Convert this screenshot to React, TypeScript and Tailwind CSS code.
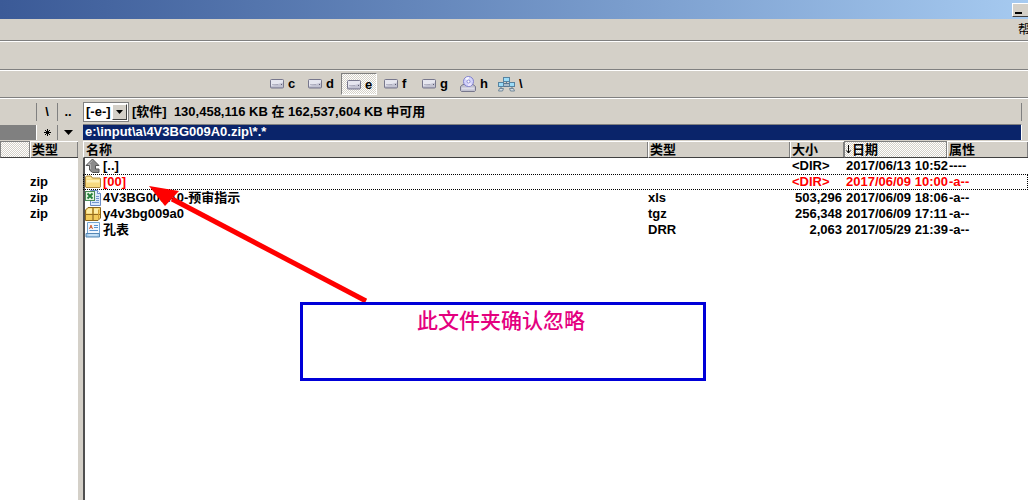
import { useState } from "react";
import type { ReactNode } from "react";

type IconName = "up" | "folder" | "excel" | "archive" | "document";

interface FileEntry {
  icon: IconName;
  name: string;
  type: string;
  size: string;
  date: string;
  attributes: string;
  focused?: boolean;
}

const files: FileEntry[] = [
  { icon: "up", name: "[..]", type: "", size: "<DIR>", date: "2017/06/13 10:52", attributes: "----" },
  { icon: "folder", name: "[00]", type: "", size: "<DIR>", date: "2017/06/09 10:00", attributes: "-a--", focused: true },
  { icon: "excel", name: "4V3BG009A0-预审指示", type: "xls", size: "503,296", date: "2017/06/09 18:06", attributes: "-a--" },
  { icon: "archive", name: "y4v3bg009a0", type: "tgz", size: "256,348", date: "2017/06/09 17:11", attributes: "-a--" },
  { icon: "document", name: "孔表", type: "DRR", size: "2,063", date: "2017/05/29 21:39", attributes: "-a--" },
];

const drives = ["c", "d", "e", "f", "g", "h", "\\"];

const leftTypes = ["", "zip", "zip", "zip"];

const hatch = "bg-[repeating-conic-gradient(#ffffff_0_25%,#d4d0c8_0_50%)] bg-[length:2px_2px]";

function Rule() {
  return (
    <div>
      <div className="h-px bg-[#808080]" />
      <div className="h-px bg-white" />
    </div>
  );
}

function DiskIcon() {
  return (
    <svg width="14" height="10" viewBox="0 0 14 10" aria-hidden="true">
      <rect x="0.5" y="0.5" width="13" height="8.5" rx="1" fill="#c3c3d2" stroke="#77778c" />
      <path d="M1 1h12v2.500L1 7z" fill="#e6e6ef" />
      <path d="M2.500 5.500h6" stroke="#85859a" strokeDasharray="1 1" />
      <path d="M1 8.500h12" stroke="#9494a8" />
      <rect x="11" y="5" width="1" height="1" fill="#5a5a70" />
    </svg>
  );
}

function DiscIcon() {
  return (
    <svg width="16" height="16" viewBox="0 0 16 16" aria-hidden="true">
      <path d="M3 8.500h10l2.500 2v4l-1 1h-13l-1-1v-4z" fill="#c0c0cf" stroke="#77778c" />
      <path d="M1.500 11.500h13v2h-13z" fill="#dedeea" />
      <circle cx="8.500" cy="5.500" r="5" fill="#d3d3fb" stroke="#8080cc" />
      <path d="M8.500 5.500L5 2.500A4.500 4.500 0 0 1 9 1z" fill="#f8f8ff" />
      <path d="M8.500 5.500l3.500 3A4.500 4.500 0 0 1 8 10z" fill="#f0e8ff" />
      <circle cx="8.500" cy="5.500" r="1.500" fill="#fff" stroke="#7777c4" strokeWidth="0.8" />
    </svg>
  );
}

function NetworkIcon() {
  return (
    <svg width="17" height="15" viewBox="0 0 17 15" aria-hidden="true">
      <rect x="5.500" y="0.5" width="6" height="4" fill="#9bdcf8" stroke="#5883a0" />
      <path d="M8.500 5v1M3 10v1M14 10v1" stroke="#5c7890" />
      <rect x="5.500" y="6.500" width="6" height="3" fill="#a9bccb" stroke="#5c7890" />
      <rect x="0.5" y="5.500" width="5" height="4" fill="#9bdcf8" stroke="#5883a0" />
      <rect x="11.500" y="5.500" width="5" height="4" fill="#9bdcf8" stroke="#5883a0" />
      <path d="M1.500 11.500h4l-1 2.500H.5zM11.500 11.500h4l1 2.500h-4z" fill="#d5dee5" stroke="#708798" />
    </svg>
  );
}

function DriveIcon({ drive }: { drive: string }) {
  if (drive === "h") return <DiscIcon />;
  if (drive === "\\") return <NetworkIcon />;
  return <DiskIcon />;
}

function FileIcon({ icon }: { icon: IconName }) {
  if (icon === "up") {
    return (
      <svg width="16" height="16" viewBox="0 0 16 16" aria-hidden="true">
        <path d="M7.500 1L14 7.500h-3.500V11H14v3.500H7.500L4.500 12V7.500H1z" fill="#8b8b8b" stroke="#555" strokeLinejoin="round" />
        <path d="M7.500 2.500L3 6.500h2.500V11" fill="none" stroke="#b5b5b5" />
      </svg>
    );
  }
  if (icon === "folder") {
    return (
      <svg width="16" height="16" viewBox="0 0 16 16" aria-hidden="true">
        <path d="M.5 13V3l1-1h4.500l1.500 2H15l.5 1v8l-.5.5H1z" fill="#f7da80" stroke="#b08c40" />
        <path d="M1.500 6h13v2.500h-13z" fill="#fdf0b4" />
        <path d="M1.500 3h4l1.500 2H1.500z" fill="#fbe79a" />
      </svg>
    );
  }
  if (icon === "excel") {
    return (
      <svg width="16" height="16" viewBox="0 0 16 16" aria-hidden="true">
        <path d="M5.500.5h7l3 3v12h-10z" fill="#dbe8fb" stroke="#6a8bc4" />
        <path d="M12.500.5v3h3" fill="#fff" stroke="#6a8bc4" />
        <path d="M7 12.500h7M11 6.500h3M11 8.500h3M11 10.500h3" stroke="#7397cf" />
        <rect x="0.5" y="1.500" width="9" height="9" fill="#e2f3df" stroke="#4b8c56" />
        <path d="M2.500 3.500l5 5M7.500 3.500l-5 5" stroke="#23803a" strokeWidth="1.800" />
      </svg>
    );
  }
  if (icon === "archive") {
    return (
      <svg width="16" height="16" viewBox="0 0 16 16" aria-hidden="true">
        <path d="M3 1.500h12.500V12L13 14.500H.5V4z" fill="#f1cb5c" stroke="#8a651b" />
        <path d="M1.500 4.500L3.500 2.500h3.500v5H1.500zM9 2.500h5l-1 5H9z" fill="#fdeda6" />
        <path d="M.5 8.500h14.500M8 1.500v13" stroke="#946c1e" strokeWidth="1.200" />
        <path d="M13.500 3.500V13" stroke="#cf9d36" />
      </svg>
    );
  }
  return (
    <svg width="16" height="16" viewBox="0 0 16 16" aria-hidden="true">
      <path d="M2.500.5h12v12h-12z" fill="#f1f7fe" stroke="#76a6d2" />
      <path d="M1 11.500h13.500v3.500H1z" fill="#a5cdec" stroke="#5587b4" />
      <path d="M4.500 7l1.500-4L7.500 7M5 5.500h2" fill="none" stroke="#d4663a" />
      <path d="M9 3.500h4M9 5.500h4M4.500 8.500H13" stroke="#5b94cf" />
      <path d="M3.500 13h9" stroke="#e7f3fd" />
    </svg>
  );
}

function DriveBar({ current, onChange }: { current: string; onChange: (drive: string) => void }) {
  return (
    <nav className="flex h-[26px] items-center gap-0.5 pl-[265px]">
      {drives.map((drive) => (
        <button
          key={drive}
          onClick={() => onChange(drive)}
          className={`flex h-[22px] w-9 items-center gap-1 border pl-1 ${
            drive === current
              ? `${hatch} border-t-[#808080] border-l-[#808080] border-r-white border-b-white pt-0.5 pl-[5px]`
              : "border-transparent"
          }`}
        >
          <DriveIcon drive={drive} />
          <span>{drive}</span>
        </button>
      ))}
    </nav>
  );
}

function HeaderCell({ children, className = "", sorted = false }: { children: ReactNode; className?: string; sorted?: boolean }) {
  return (
    <th
      className={`h-[17px] border-b border-b-[#404040] border-l p-0 text-left ${
        sorted ? `${hatch} border-l-[#808080] border-t border-t-[#808080]` : "border-l-white border-t border-t-white bg-[#d4d0c8]"
      } ${className}`}
    >
      <button className="flex h-[15px] w-full items-center border-r border-[#808080] pl-px leading-[15px]">{children}</button>
    </th>
  );
}

function LeftPanel() {
  return (
    <section className="flex w-[78px] shrink-0 flex-col">
      <div className="flex h-[25px] items-center pl-9">
        <button className="h-[18px] w-[21px] border-l border-[#808080] leading-4">\</button>
        <button className="h-[18px] w-[21px] border-l border-[#808080] leading-4">..</button>
      </div>
      <div className="flex h-[17px] items-center">
        <div className="h-[15px] w-9 bg-[#808080]" />
        <button className="flex h-[15px] w-[21px] items-center justify-center border-l border-white" aria-label="*">
          <svg width="7" height="7" viewBox="0 0 7 7">
            <path d="M3.500 0v7M0 3.500h7M1 1l5 5M6 1L1 6" stroke="#000" />
          </svg>
        </button>
        <button className="flex h-[15px] w-[21px] items-center justify-center border-l border-[#808080]" aria-label="History">
          <svg width="9" height="5" viewBox="0 0 9 5">
            <path d="M0 0h9L4.500 5z" />
          </svg>
        </button>
      </div>
      <table className="w-full table-fixed border-separate border-spacing-0">
        <thead>
          <tr>
            <HeaderCell className="w-[30px]" sorted>
              {""}
            </HeaderCell>
            <HeaderCell>类型</HeaderCell>
          </tr>
        </thead>
        <tbody className="bg-white">
          {leftTypes.map((type, index) => (
            <tr key={index}>
              <td className="h-4 p-0" />
              <td className="h-4 p-0">{type}</td>
            </tr>
          ))}
        </tbody>
      </table>
      <div className="flex-1 bg-white" />
    </section>
  );
}

function FileTable() {
  return (
    <table className="w-full table-fixed border-separate border-spacing-0">
      <thead>
        <tr>
          <HeaderCell>
            <span className="pl-px">名称</span>
          </HeaderCell>
          <HeaderCell className="w-[142px]">类型</HeaderCell>
          <HeaderCell className="w-[54px]">大小</HeaderCell>
          <HeaderCell className="w-[103px]" sorted>
            <svg className="mr-px" width="5" height="9" viewBox="0 0 5 9" aria-hidden="true">
              <path d="M2.500 0v8M.5 5.500l2 2.500 2-2.500" fill="none" stroke="#000" />
            </svg>
            日期
          </HeaderCell>
          <HeaderCell className="w-[81px]">属性</HeaderCell>
        </tr>
      </thead>
      <tbody className="bg-white">
        {files.map((file) => (
          <tr
            key={file.name}
            className={file.focused ? "text-[#ff0000] outline-1 -outline-offset-1 outline-dotted outline-black" : ""}
          >
            <td className="h-4 border-l-2 border-[#505050] p-0">
              <div className="flex h-4 items-center gap-0.5">
                <FileIcon icon={file.icon} />
                <span className="whitespace-nowrap">{file.name}</span>
              </div>
            </td>
            <td className="h-4 p-0">{file.type}</td>
            <td className={`h-4 p-0 ${file.type ? "pr-0.5 text-right" : "pl-0.5"}`}>{file.size}</td>
            <td className="h-4 whitespace-nowrap p-0 pl-0.5">{file.date}</td>
            <td className="h-4 p-0 pl-0.5">{file.attributes}</td>
          </tr>
        ))}
      </tbody>
    </table>
  );
}

function RightPanel() {
  return (
    <section className="flex min-w-0 flex-1 flex-col">
      <div className="mr-1.5 flex h-[25px] items-center">
        <label className="relative flex h-5 w-[46px] border border-[#808080] bg-white">
          <select className="w-full appearance-none bg-white pl-0.5 leading-4 outline-none" aria-label="Drive" defaultValue="e">
            <option value="e">[-e-]</option>
          </select>
          <span className="pointer-events-none absolute top-px right-px flex h-4 w-[15px] items-center justify-center border border-t-white border-l-white border-r-[#404040] border-b-[#404040] bg-[#d4d0c8]">
            <svg width="7" height="4" viewBox="0 0 7 4">
              <path d="M0 0h7L3.500 4z" />
            </svg>
          </span>
        </label>
        <span className="ml-[3px] whitespace-pre">{"[软件]  130,458,116 KB 在 162,537,604 KB 中可用"}</span>
        <span className="ml-auto h-[18px] border-r border-[#808080]" />
      </div>
      <div className="mr-1.5 mb-px h-4 border-t border-r border-t-[#808080] border-r-white bg-[#0a246a] pl-0.5 leading-[14px] text-white">
        {"e:\\input\\a\\4V3BG009A0.zip\\*.*"}
      </div>
      <FileTable />
      <div className="flex-1 border-l-2 border-[#505050] bg-white" />
    </section>
  );
}

function Annotation() {
  return (
    <>
      <svg className="pointer-events-none absolute top-[184px] left-[148px]" width="222" height="120" viewBox="0 0 222 120" aria-hidden="true">
        <path d="M24 15L218 117" stroke="#ff0000" strokeWidth="5" />
        <path d="M1 2L31 7L17 22z" fill="#ff0000" />
      </svg>
      <div className="absolute top-[302px] left-[300px] h-[79px] w-[406px] border-[3px] border-[#0000d8] bg-white pr-1 text-center font-['Liberation_Serif','Noto_Sans_CJK_SC',serif] text-[21px] font-medium leading-8 text-[#e4007f]">
        此文件夹确认忽略
      </div>
    </>
  );
}

function App() {
  const [drive, setDrive] = useState("e");

  return (
    <div className="relative flex min-h-screen flex-col overflow-hidden bg-[#d4d0c8] font-['Liberation_Sans','Noto_Sans_CJK_SC',sans-serif] text-[13px] font-bold leading-4 text-black">
      <header className="flex h-[19px] items-center justify-end overflow-hidden bg-linear-to-r from-[#3b5a97] to-[#a6caf0]">
        <button
          className="flex h-3.5 w-4 items-end border-t border-b border-l border-t-white border-b-[#404040] border-l-white bg-[#d4d0c8] pb-0.5 pl-0.5"
          aria-label="Minimize"
        >
          <span className="h-0.5 w-[7px] bg-black" />
        </button>
      </header>
      <div className="flex h-[21px] items-center justify-end">
        <button className="w-2.5 overflow-hidden text-xs font-normal">帮</button>
      </div>
      <Rule />
      <div className="h-[27px]" />
      <Rule />
      <DriveBar current={drive} onChange={setDrive} />
      <Rule />
      <main className="flex flex-1 gap-[5px]">
        <LeftPanel />
        <RightPanel />
      </main>
      <Annotation />
    </div>
  );
}

export default App;
